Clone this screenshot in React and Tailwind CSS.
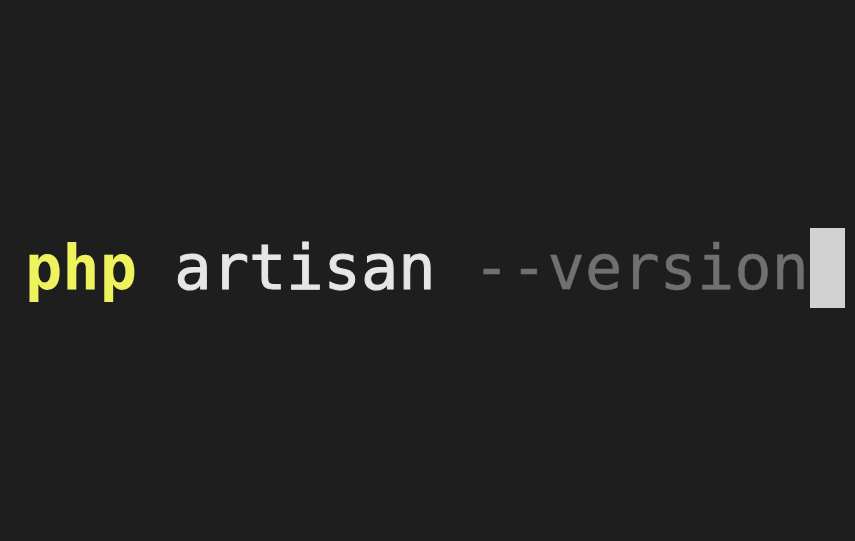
export default function App() {
  return (
    <div className="h-[541px] w-[855px] bg-[#1e1e1e] flex items-center overflow-hidden">
      <div
        className="mb-[6px] flex items-center pl-[25px] text-[62px] leading-none whitespace-pre"
        style={{ fontFamily: '"DejaVu Sans Mono", "Liberation Mono", monospace' }}
      >
        <span className="font-bold text-[#eef25c]">php</span>
        <span className="text-[#e6e6e6] [-webkit-text-stroke:1px_#e6e6e6]"> artisan </span>
        <span className="text-[#707070] [-webkit-text-stroke:0.5px_#707070]">--version</span>
        <span className="ml-[1px] inline-block h-[80px] w-[35px] bg-[#d2d2d2]" />
      </div>
    </div>
  );
}
